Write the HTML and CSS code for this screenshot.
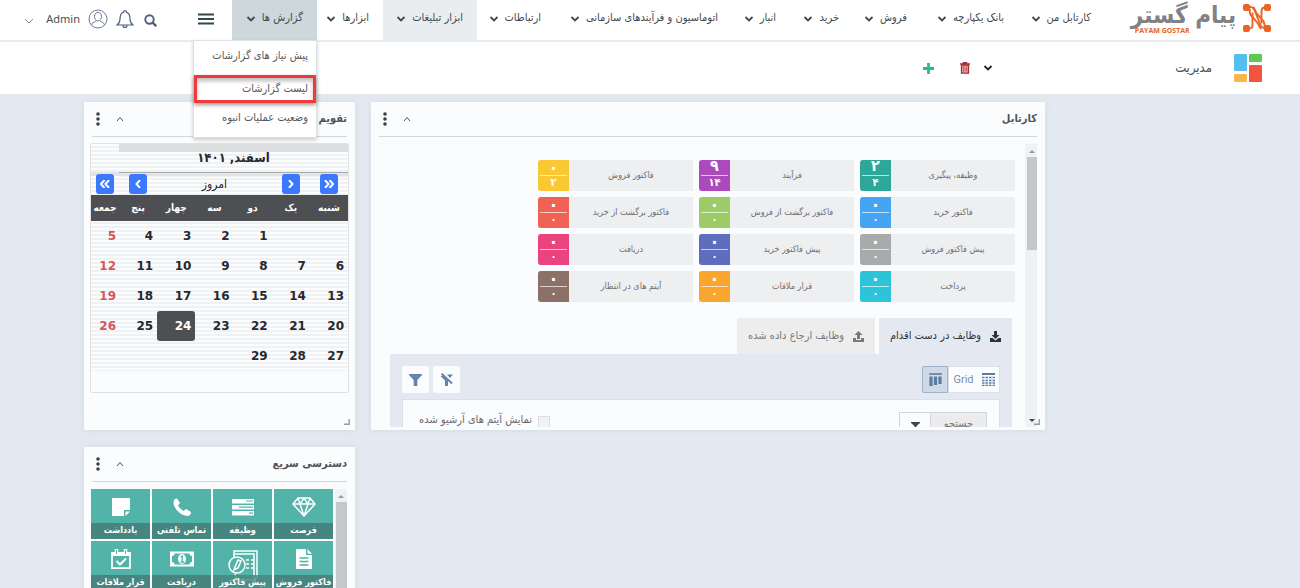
FILE: index.html
```html
<!DOCTYPE html>
<html lang="fa" dir="rtl">
<head>
<meta charset="utf-8">
<title>پیام گستر</title>
<link rel="stylesheet" href="styles.css">
</head>
<body>
<svg class="defs" aria-hidden="true">
  <symbol id="chev" viewBox="0 0 10 8"><path d="M1.500 2L5 5.500 8.500 2" fill="none" stroke="currentColor" stroke-width="1.800"/></symbol>
  <symbol id="thin-up" viewBox="0 0 8 6"><path d="M1 5l3-3.500L7 5" fill="none" stroke="currentColor"/></symbol>
  <symbol id="dots" viewBox="0 0 4 14"><g fill="currentColor"><circle cx="2" cy="2" r="1.800"/><circle cx="2" cy="7" r="1.800"/><circle cx="2" cy="12" r="1.800"/></g></symbol>
  <symbol id="grip" viewBox="0 0 6 6"><path d="M5.200 0v5.200H0" fill="none" stroke="#999" stroke-width="1.400"/></symbol>
</svg>

<header class="topbar">
  <a class="logo" href="#">
    <svg class="logo-mark" viewBox="0 0 28 30">
      <g fill="none" stroke="#ea6425" stroke-width="1.900">
        <path d="M5 4h2.500c2 0 3 1 4 3l5.500 14c1 3 2.500 4.500 6 4.500"/>
        <path d="M4 25.500h2c2.500 0 3.500-1 3.500-3.500V9.500"/>
        <path d="M24 4.500h-2c-2.500 0-3.500 1-3.500 3.500v12.500"/>
        <path d="M7 6c-1 4 0 6 2.500 8l5 6c1.500 2 2 4 3.500 6"/>
        <path d="M10.500 4c1.500 3 2 5 3.500 7l5 5.500c2.500 2.500 3 4 2.500 8"/>
      </g>
      <g fill="#ea6425"><rect width="7" height="7" y="1" rx="2"/><rect x="21" y="1" width="7" height="7" rx="2"/><rect y="22" width="7" height="7" rx="2"/><rect x="21" y="22" width="7" height="7" rx="2"/></g>
    </svg>
    <span class="logo-text"><span>پیام گستر</span><small dir="ltr">PAYAM GOSTAR</small></span>
  </a>
  <nav class="menu">
    <a href="#">کارتابل من<svg><use href="#chev"/></svg></a>
    <a href="#">بانک یکپارچه<svg><use href="#chev"/></svg></a>
    <a href="#">فروش<svg><use href="#chev"/></svg></a>
    <a href="#">خرید<svg><use href="#chev"/></svg></a>
    <a href="#">انبار<svg><use href="#chev"/></svg></a>
    <a href="#">اتوماسیون و فرآیندهای سازمانی<svg><use href="#chev"/></svg></a>
    <a href="#">ارتباطات<svg><use href="#chev"/></svg></a>
    <a class="soft" href="#">ابزار تبلیغات<svg><use href="#chev"/></svg></a>
    <a href="#">ابزارها<svg><use href="#chev"/></svg></a>
    <div class="open">
      <a href="#">گزارش ها<svg><use href="#chev"/></svg></a>
      <div class="dropdown">
        <a href="#">پیش نیاز های گزارشات</a>
        <a class="marked" href="#">لیست گزارشات</a>
        <a href="#">وضعیت عملیات انبوه</a>
      </div>
    </div>
  </nav>
  <div class="tools">
    <button class="burger" aria-label="Menu"><svg viewBox="0 0 16 12"><path d="M0 1.500h16M0 6h16M0 10.500h16" stroke="#33474f" stroke-width="1.800"/></svg></button>
    <button aria-label="Search"><svg class="i13" viewBox="0 0 13 13"><circle cx="5.500" cy="5.500" r="4.200" fill="none" stroke="#4a5f7d" stroke-width="1.900"/><path d="M8.500 8.500l3.700 3.700" stroke="#4a5f7d" stroke-width="2.400"/></svg></button>
    <button aria-label="Notifications"><svg class="bell" viewBox="0 0 18 20"><path d="M9 1.500a1.300 1.300 0 0 1 1.300 1.600C13.500 4 14 6.500 14 10c0 3 1 4.500 3 6H1c2-1.500 3-3 3-6 0-3.500.5-6 3.700-6.900A1.300 1.300 0 0 1 9 1.500zM7 16.500c0 2.600 4 2.600 4 0" fill="none" stroke="#4d617c" stroke-width="1.200"/></svg></button>
    <button aria-label="Profile"><svg class="user" viewBox="0 0 20 20"><g fill="none" stroke="#6b7c93"><circle cx="10" cy="10" r="9"/><path d="M10 3.500c4.700 0 4.700 7.500 0 8.500-4.700-1-4.700-8.500 0-8.500zM3.500 16c.5-2.500 2-2.500 4.500-4M16.500 16c-.5-2.500-2-2.500-4.500-4"/></g></svg></button>
    <span class="admin">Admin</span>
    <button class="account" aria-label="Account menu"><svg class="i10" viewBox="0 0 10 8"><path d="M1 2l4 4 4-4" fill="none" stroke="#7b8a9c"/></svg></button>
  </div>
</header>

<section class="subbar">
  <svg class="dash" viewBox="0 0 28 28"><rect width="13" height="17" rx="1" fill="#53bfee"/><rect x="15" width="13" height="8" rx="1" fill="#5bc953"/><rect y="20" width="13" height="8" rx="1" fill="#fab64c"/><rect x="15" y="11" width="13" height="17" rx="1" fill="#f2543f"/></svg>
  <h1>مدیریت</h1>
  <div class="actions">
    <button aria-label="More"><svg class="small-chev"><use href="#chev"/></svg></button>
    <button aria-label="Delete"><svg class="trash" viewBox="0 0 10 12"><path d="M3.500 1.500V.6h3v.9M0 2h10" fill="none" stroke="#a92c31" stroke-width="1.400"/><path d="M1.500 3h7v8.200h-7z" fill="#dba6a0" stroke="#a92c31" stroke-width="1.300"/><path d="M3.800 4.500v5M6.200 4.500v5" stroke="#a92c31" stroke-width=".7"/></svg></button>
    <button class="add" aria-label="Add"><svg class="plus" viewBox="0 0 11 11"><path d="M5.500 0v11M0 5.500h11" stroke="#2abb95" stroke-width="2.800"/></svg></button>
  </div>
</section>

<main class="board">
  <section class="panel inbox">
    <header class="panel-head"><h2>کارتابل</h2><button aria-label="Collapse"><svg class="up"><use href="#thin-up"/></svg></button><button aria-label="Options"><svg class="dots"><use href="#dots"/></svg></button></header>
    <div class="scroller">
      <div class="bar"><i class="arrow"></i><i class="thumb"></i><i class="arrow down"></i></div>
      <div class="inbox-body">
        <div class="tiles">
          <a href="#" class="tile teal big"><span>وظیفه، پیگیری</span><b><i>۲</i><i>۴</i></b></a>
          <a href="#" class="tile purple big"><span>فرآیند</span><b><i>۹</i><i>۱۴</i></b></a>
          <a href="#" class="tile yellow"><span>فاکتور فروش</span><b><i>۰</i><i>۲</i></b></a>
          <a href="#" class="tile blue"><span>فاکتور خرید</span><b><i>۰</i><i>۰</i></b></a>
          <a href="#" class="tile green"><span>فاکتور برگشت از فروش</span><b><i>۰</i><i>۰</i></b></a>
          <a href="#" class="tile red"><span>فاکتور برگشت از خرید</span><b><i>۰</i><i>۰</i></b></a>
          <a href="#" class="tile gray"><span>پیش فاکتور فروش</span><b><i>۰</i><i>۰</i></b></a>
          <a href="#" class="tile indigo"><span>پیش فاکتور خرید</span><b><i>۰</i><i>۰</i></b></a>
          <a href="#" class="tile pink"><span>دریافت</span><b><i>۰</i><i>۰</i></b></a>
          <a href="#" class="tile cyan"><span>پرداخت</span><b><i>۰</i><i>۰</i></b></a>
          <a href="#" class="tile orange"><span>قرار ملاقات</span><b><i>۰</i><i>۰</i></b></a>
          <a href="#" class="tile brown"><span>آیتم های در انتظار</span><b><i>۰</i><i>۰</i></b></a>
        </div>
        <div class="tabs">
          <button class="tab on"><svg viewBox="0 0 11 11"><path d="M4 0h3v4h2.500l-4 4-4-4H4zM0 7h2.500l3 2.500 3-2.500H11v4H0z" fill="currentColor"/></svg>وظایف در دست اقدام</button>
          <button class="tab"><svg viewBox="0 0 11 11"><path d="M4 8h3V4h2.500l-4-4-4 4H4zM0 7h3v2h5V7h3v4H0z" fill="currentColor"/></svg>وظایف ارجاع داده شده</button>
        </div>
        <div class="pane">
          <div class="pane-tools">
            <div class="views">
              <button><svg viewBox="0 0 13 13"><path d="M0 1h13" stroke="#5c7ba3" stroke-width="2"/><path d="M0 4.500h13M0 7.500h13M0 10h13M0 12.500h13" stroke="#5c7ba3" stroke-width="1.400" stroke-dasharray="2.500 1"/></svg>Grid</button>
              <button class="on" aria-label="Board"><svg viewBox="0 0 13 13"><path d="M0 1h13" stroke="#5c7ba3" stroke-width="1.600"/><path d="M2 3.500V13M6.500 3.500V12M11 3.500V11" stroke="#5c7ba3" stroke-width="3.200"/></svg></button>
            </div>
            <div class="filters">
              <button aria-label="Clear filter"><svg viewBox="0 0 13 13"><path d="M1.500.5L12 10.500" stroke="#6683a9" stroke-width="1.800"/><path d="M.5 3l3-.5L8 7v6H5V7.500zM7 1.500h6L10 5z" fill="#6683a9"/></svg></button>
              <button aria-label="Filter"><svg viewBox="0 0 13 13"><path d="M0 1h13v1L8.300 7v6H4.700V7L0 2z" fill="#6683a9"/></svg></button>
            </div>
          </div>
          <div class="query">
            <div class="search"><span>جستجو</span><button aria-label="Search options"><svg viewBox="0 0 9 6"><path d="M0 0h9v1L5.500 4v2h-2V4L0 1z" fill="#444"/></svg></button></div>
            <label><input type="checkbox">نمایش آیتم های آرشیو شده</label>
          </div>
        </div>
      </div>
    </div>
    <svg class="grip"><use href="#grip"/></svg>
  </section>

  <div class="side">
    <section class="panel calendar">
      <header class="panel-head"><h2>تقویم</h2><button aria-label="Collapse"><svg class="up"><use href="#thin-up"/></svg></button><button aria-label="Options"><svg class="dots"><use href="#dots"/></svg></button></header>
      <div class="cal-box">
        <table>
          <colgroup><col><col><col><col><col><col><col class="narrow"></colgroup>
          <thead>
            <tr class="title"><th colspan="6">اسفند, ۱۴۰۱</th><td></td></tr>
            <tr class="nav"><td><button aria-label="Year back"><svg viewBox="0 0 10 8"><path d="M1 0l3.500 4L1 8M5.500 0L9 4 5.500 8"/></svg></button></td><td><button aria-label="Month back"><svg viewBox="0 0 10 8"><path d="M3 0l3.500 4L3 8"/></svg></button></td><td colspan="3">امروز</td><td><button aria-label="Month forward"><svg viewBox="0 0 10 8"><path d="M7 0L3.500 4 7 8"/></svg></button></td><td><button aria-label="Year forward"><svg viewBox="0 0 10 8"><path d="M4.500 0L1 4l3.500 4M9 0L5.500 4 9 8"/></svg></button></td></tr>
            <tr class="days"><th>شنبه</th><th>یک</th><th>دو</th><th>سه</th><th>چهار</th><th>پنج</th><th>جمعه</th></tr>
          </thead>
          <tbody>
            <tr><td></td><td></td><td>1</td><td>2</td><td>3</td><td>4</td><td>5</td></tr>
            <tr><td>6</td><td>7</td><td>8</td><td>9</td><td>10</td><td>11</td><td>12</td></tr>
            <tr><td>13</td><td>14</td><td>15</td><td>16</td><td>17</td><td>18</td><td>19</td></tr>
            <tr><td>20</td><td>21</td><td>22</td><td>23</td><td class="today">24</td><td>25</td><td>26</td></tr>
            <tr><td>27</td><td>28</td><td>29</td><td></td><td></td><td></td><td></td></tr>
          </tbody>
        </table>
      </div>
      <svg class="grip"><use href="#grip"/></svg>
    </section>

    <section class="panel quick">
      <header class="panel-head"><h2>دسترسی سریع</h2><button aria-label="Collapse"><svg class="up"><use href="#thin-up"/></svg></button><button aria-label="Options"><svg class="dots"><use href="#dots"/></svg></button></header>
      <div class="scroller">
        <div class="bar"><i class="arrow"></i><i class="thumb"></i></div>
        <div class="shortcuts">
          <a href="#"><svg viewBox="0 0 24 20"><path d="M6 1h12l5 6-11 12L1 7zM1 7h22M8 7l4 12 4-12-4-6zM6 1l2 6M18 1l-2 6" fill="none" stroke="#fff" stroke-width="1.500"/></svg><span>فرصت</span></a>
          <a href="#"><svg viewBox="0 0 24 20"><path d="M1 2h22v4.500H1zM1 8h22v4.500H1zM1 14h22v4.500H1z" fill="#fff"/><path d="M15 4h7M8 10.200h14M18 16.200h4" stroke="#52b3a9" stroke-width="1.200"/></svg><span>وظیفه</span></a>
          <a href="#"><svg viewBox="0 0 24 20"><path d="M7 1.500l3 4.500-2 2.500c1.500 2.500 3 4 5.500 5.500l2.500-2 5 3c0 3-2 4-4 4C10 18 4 11.500 3.500 6c0-2.500 1-4.500 3.500-4.500z" fill="#fff"/></svg><span>تماس تلفنی</span></a>
          <a href="#"><svg viewBox="0 0 24 20"><path d="M3 1h18v12h-6v6H3zM16.500 14.500H21L16.500 19z" fill="#fff"/></svg><span>یادداشت</span></a>
          <a href="#"><svg viewBox="0 0 24 20"><path d="M4 0h10v6h6v14H4zM15.500 0L20 4.700h-4.500z" fill="#fff"/><path d="M7.500 9h9M7.500 12.500h9M7.500 16h9" stroke="#52b3a9" stroke-width="1.400"/></svg><span>فاکتور فروش</span></a>
          <a href="#" class="tall"><svg viewBox="0 0 30 30"><g fill="none" stroke="#fff" stroke-width="1.500"><path d="M6 7V1h23v26l-3 3H9l-2-6M6 4h20v23M18 10h3M23 10h3M18 14h3M23 14h3M18 18h3M23 18h3"/><circle cx="9" cy="15" r="8"/><path d="M7 17l3-7 3 1-3 7-4 2z"/></g></svg><span>پیش فاکتور</span></a>
          <a href="#"><svg viewBox="0 0 24 20"><path d="M0 2.500h24v15H0z" fill="#fff"/><path d="M4.500 4.500h15a2.500 2.500 0 0 0 2.500 2.500v6a2.500 2.500 0 0 0-2.500 2.500h-15A2.500 2.500 0 0 0 2 13V7a2.500 2.500 0 0 0 2.500-2.500z" fill="#52b3a9"/><ellipse cx="12" cy="10" rx="4" ry="5" fill="#fff"/><path d="M10.500 8L12.300 7v6M10.500 13h3.500" fill="none" stroke="#52b3a9" stroke-width="1.300"/></svg><span>دریافت</span></a>
          <a href="#"><svg viewBox="0 0 24 20"><path d="M3 4h18v15.200H3z" fill="none" stroke="#fff" stroke-width="1.800"/><path d="M3 3h18v4H3z" fill="#fff"/><path d="M7.500 0v5M16.500 0v5" stroke="#fff" stroke-width="3.500"/><path d="M7.500 1v4M16.500 1v4" stroke="#52b3a9"/><path d="M7.500 12l3.500 3.500 6-6" fill="none" stroke="#fff" stroke-width="2"/></svg><span>قرار ملاقات</span></a>
        </div>
      </div>
    </section>
  </div>
</main>
</body>
</html>
```
FILE: styles.css
```css
* { box-sizing: border-box; }
body {
  margin: 0;
  height: 100vh;
  overflow: hidden;
  display: flex;
  flex-direction: column;
  background: #e4e9f1;
  color: #4a4d52;
  font: 11px/16px "DejaVu Sans Condensed", "DejaVu Sans", sans-serif;
}
a { color: inherit; text-decoration: none; }
button { border: 0; padding: 0; margin: 0; background: none; color: inherit; font: inherit; display: inline-flex; align-items: center; justify-content: center; cursor: pointer; }
h1, h2 { margin: 0; }
i, b { font-style: normal; }
.defs { position: absolute; width: 0; height: 0; }

.topbar { flex: none; display: flex; height: 42px; background: #fff; border-bottom: 2px solid #e9ebed; }
.logo { flex: none; display: flex; gap: 7px; width: 195px; padding: 3px 29px 0 0; }
.logo-mark { flex: none; width: 28px; height: 30px; }
.logo-text { display: flex; flex-direction: column; font-size: 24px; line-height: 24px; font-weight: bold; color: #808285; white-space: nowrap; }
.logo-text small { align-self: flex-end; margin-left: 4px; font: bold 7px/8px "Open Sans", sans-serif; color: #ea6425; }
.menu { flex: 1; min-width: 0; display: grid; grid-template-columns: 87fr 97fr 68fr 63fr 58fr 177fr 78fr 94fr 66fr 85fr; color: #3f4a50; white-space: nowrap; }
.menu > a, .open > a { display: flex; align-items: center; gap: 6px; min-width: 0; height: 40px; padding: 0 14px 5px 0; }
.menu svg { flex: none; width: 10px; height: 8px; margin-top: 3px; }
.menu .soft { background: #e9edf0; }
.open { position: relative; background: #cdd7dc; }
.dropdown { position: absolute; z-index: 5; top: 40px; right: 0; width: 124px; background: #fff; border: 1px solid #dce1e5; box-shadow: 0 2px 4px #0003; }
.dropdown a { display: block; height: 34px; padding: 7px 8px; color: #55585c; }
.dropdown .marked { height: 28px; padding: 3px 5px; border: 3px solid #f03a3a; box-shadow: 0 2px 4px #0006, inset 0 3px 4px #0004; }
.tools { flex: none; width: 232px; display: flex; align-items: center; padding: 0 18px 3px 0; gap: 8px; }
.burger { margin-left: 33px; }
.burger svg { width: 16px; height: 12px; }
.i13 { width: 13px; height: 13px; margin-left: 2px; margin-top: 3px; }
.bell { width: 18px; height: 20px; }
.user { width: 20px; height: 20px; }
.admin { font: 11px/16px "Noto Sans", sans-serif; }
.account { margin-right: 4px; }
.i10 { width: 10px; height: 8px; margin-top: 5px; }

.subbar { flex: none; display: flex; align-items: center; gap: 22px; height: 52px; padding-right: 38px; background: #fff; }
.dash { width: 28px; height: 28px; }
h1 { font-size: 13px; line-height: 18px; font-weight: normal; width: 42px; white-space: nowrap; }
.actions { display: flex; align-items: center; gap: 13px; margin-right: 155px; color: #222; }
.small-chev { width: 10px; height: 8px; }
.trash { width: 10px; height: 12px; }
.add { margin-right: 13px; }
.plus { width: 11px; height: 11px; }

.board { flex: 1; min-height: 0; overflow: hidden; display: flex; align-items: flex-start; gap: 16px; padding: 8px 255px 0 84px; }
.panel { position: relative; display: flex; flex-direction: column; background: #fbfcfe; box-shadow: 0 0 6px #b8c4cc66; }
.inbox { flex: 1; min-width: 0; height: 328px; padding: 0 8px 3px; }
.side { flex: none; width: 271px; display: flex; flex-direction: column; gap: 17px; }
.panel-head { display: flex; align-items: center; gap: 16px; height: 35px; flex: none; border-bottom: 1px solid #d4d7da; }
.panel-head h2 { flex: 1; font-size: 11px; line-height: 16px; color: #505357; }
.up { width: 8px; height: 6px; }
.dots { width: 4px; height: 14px; margin-left: 4px; color: #3c3f43; }
.grip { position: absolute; right: 5px; bottom: 5px; width: 6px; height: 6px; }
.scroller { flex: 1; min-height: 0; display: flex; overflow: hidden; }
.inbox .scroller { margin-top: 7px; }
.bar { flex: none; width: 14px; display: flex; flex-direction: column; align-items: center; gap: 4px; padding-top: 6px; background: #f0f1f2; }
.inbox .bar { margin-right: -2px; }
.arrow { border: 3px solid transparent; border-top: 0; border-bottom: 3px solid #999; }
.arrow.down { margin: auto 0 5px; transform: rotate(180deg); border-bottom-color: #444; }
.thumb { width: 11px; height: 93px; background: #c6c7c9; }
.inbox-body { flex: 1; min-width: 0; overflow: hidden; padding: 16px 13px 0 11px; }
.tiles { display: grid; grid-template-columns: repeat(3, 155px); gap: 6px; margin-right: -3px; }
.tile { display: flex; height: 31px; font-size: 9px; background: #eeeff1; color: #6d7074; }
.tile span { flex: 1; display: flex; align-items: center; justify-content: center; padding-bottom: 2px; }
.tile b { width: 31px; display: flex; flex-direction: column; border-radius: 3px 0 0 3px; color: #fff; padding: 0 2px; overflow: hidden; text-align: center; }
.tile i { height: 15px; font-size: 18px; line-height: 16px; }
.tile i + i { border-top: 1px solid #ffffffb0; height: 16px; font-size: 11px; line-height: 14px; }
.tile.big i:first-child { font-size: 16px; line-height: 12px; }
.teal b { background: #2da79a; } .purple b { background: #ab4bbb; } .yellow b { background: #fac832; }
.blue b { background: #45a4f3; } .green b { background: #9ccb68; } .red b { background: #ef6254; }
.gray b { background: #a9aaab; } .indigo b { background: #5e6dbd; } .pink b { background: #ea437e; }
.cyan b { background: #2bc4d8; } .orange b { background: #faa62e; } .brown b { background: #8d7067; }
.tabs { display: flex; gap: 4px; margin-top: 16px; }
.tab { width: 138px; height: 36px; gap: 9px; background: #ededee; color: #777a7d; white-space: nowrap; }
.tab.on { width: 133px; background: #e4e9f1; color: #303236; }
.tab svg { width: 11px; height: 11px; }
.pane { padding: 12px; background: #e4e9f1; }
.pane-tools { display: flex; justify-content: space-between; }
.views { display: flex; height: 27px; font: 11px/16px Roboto, sans-serif; color: #7c8fab; }
.views button { width: 52px; gap: 8px; background: #fbfcfe; border: 1px solid #d8e0e9; }
.views .on { width: 26px; background: #cfdae6; border-color: #9db3cc; border-radius: 2px 0 0 2px; }
.views svg, .filters svg { width: 13px; height: 13px; }
.filters { display: flex; gap: 4px; }
.filters button { width: 27px; height: 27px; background: #fbfcfe; border-radius: 2px; }
.query { display: flex; justify-content: space-between; margin-top: 6px; padding: 12px 12px 20px 16px; background: #fbfcfe; border: 1px solid #dcdfe3; }
.search { display: flex; width: 88px; height: 28px; border: 1px solid #d2d4d7; color: #777; }
.search span { flex: 1; background: #ececed; text-align: center; padding-top: 3px; }
.search button { width: 31px; align-items: flex-start; padding-top: 9px; border-right: 1px solid #d2d4d7; }
.search svg { width: 9px; height: 6px; }
.query label { display: flex; gap: 6px; height: 16px; color: #686b6f; }
.query input { appearance: none; margin: 4px 0 0; width: 12px; height: 12px; background: #f2f1f2; border: 1px solid #dddbdd; }

.calendar { height: 328px; padding: 0 8px; }
.cal-box { margin: 6px -2px 0; height: 250px; border: 1px solid #dfe1e3; border-radius: 2px; }
.calendar table { width: 100%; table-layout: fixed; border-collapse: collapse; background: repeating-linear-gradient(#fbfcfd 0 2px, #f0f1f3 2px 4px); color: #26282b; }
.calendar td, .calendar th { padding: 0; white-space: nowrap; }
.narrow { width: 28px; }
.title th { height: 28px; font-size: 13px; border-bottom: 1px solid #a9abad; background: linear-gradient(#dedfe1 8px, transparent 8px); }
.nav td { height: 23px; text-align: center; font-size: 12px; line-height: 16px; background: linear-gradient(#e2e3e5 4px, transparent 4px); }
.nav button { width: 18px; height: 20px; border-radius: 3px; background: #3b78fb; vertical-align: middle; }
.nav svg { width: 10px; height: 8px; fill: none; stroke: #fff; stroke-width: 2; }
.days { background: #4e4f52; color: #fff; }
.days th { height: 26px; font-size: 10px; }
.calendar tbody td { height: 30px; padding-right: 4px; text-align: right; font: bold 12px/16px "DejaVu Sans", sans-serif; }
.calendar tbody td:last-child { color: #d2575c; padding-right: 3px; }
.calendar tbody .today { background: #4e4f52; color: #fff; border-radius: 3px; }

.quick { height: 328px; padding: 0 8px; }
.quick .scroller { margin: 7px 0 0 -1px; gap: 2px; }
.quick .bar { width: 12px; }
.quick .thumb { height: 160px; }
.shortcuts { flex: 1; display: grid; grid-template-columns: repeat(4, 1fr); gap: 2px; align-content: start; }
.shortcuts a { display: flex; flex-direction: column; align-items: center; height: 50px; padding-top: 8px; background: #52b3a9; color: #fff; font-size: 9px; font-weight: bold; }
.shortcuts svg { width: 24px; height: 20px; }
.shortcuts span { align-self: stretch; margin-top: auto; height: 16px; line-height: 14px; text-align: center; background: #478680; white-space: nowrap; }
.shortcuts .tall svg { width: 30px; height: 32px; margin-bottom: -6px; }
.shortcuts .tall span { position: relative; background: #478680cc; }
```
